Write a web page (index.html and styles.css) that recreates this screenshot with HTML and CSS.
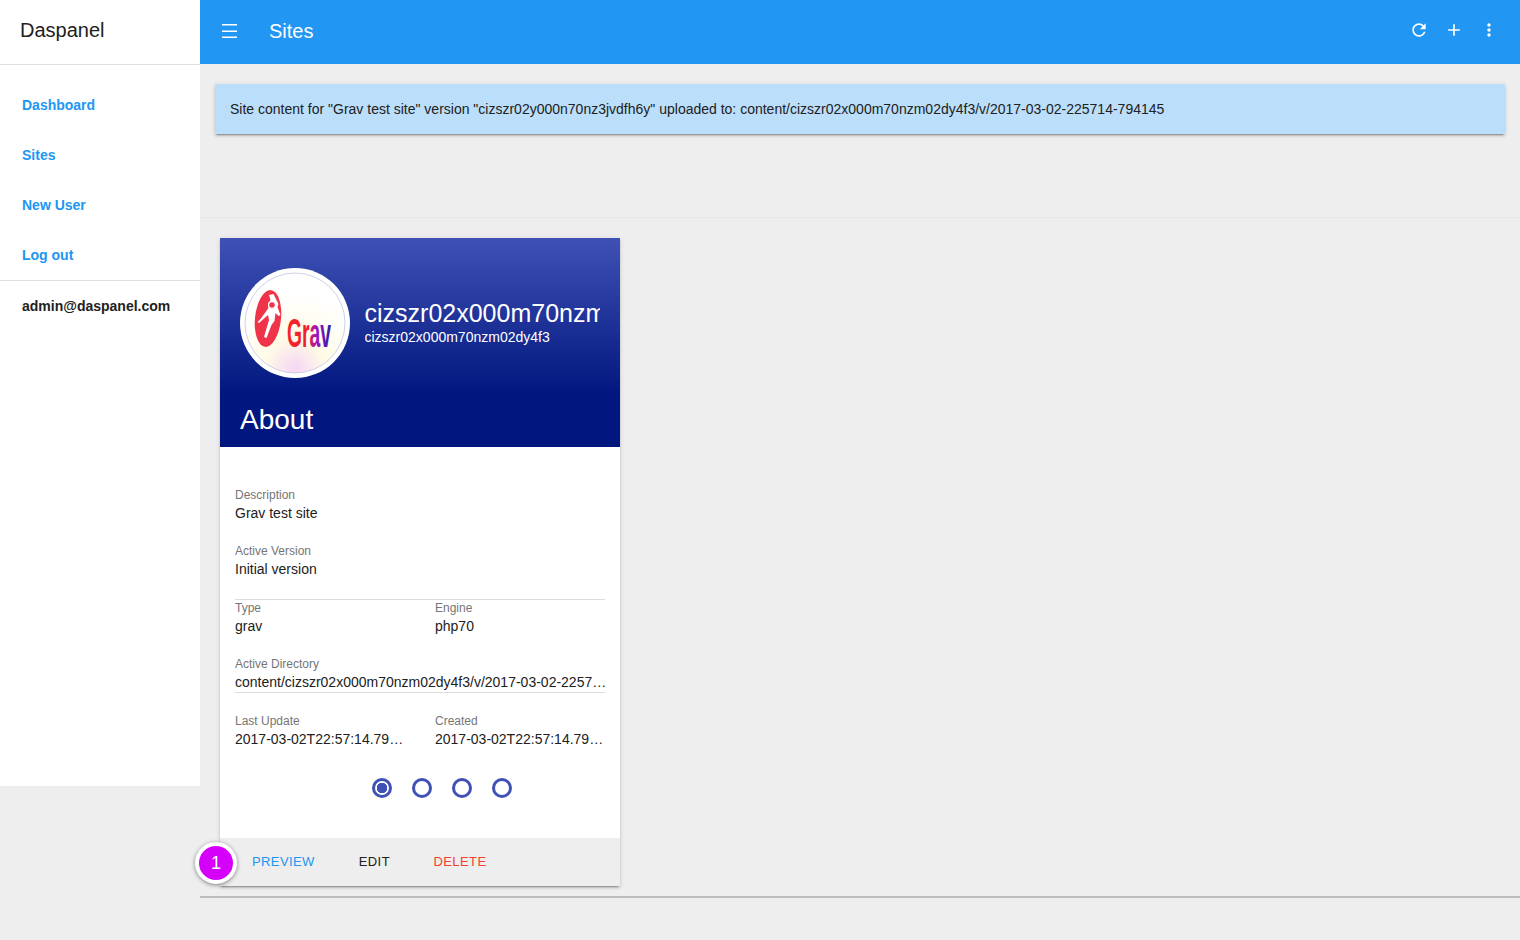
FILE: index.html
```html
<!DOCTYPE html>
<html lang="en">
<head>
  <meta charset="UTF-8" />
  <title>Daspanel - Sites</title>
  <link rel="stylesheet" href="styles.css">
</head>
<body>
  <div class="layout">
    <aside class="drawer">
      <div class="drawer-title">Daspanel</div>
      <nav class="drawer-nav">
        <a href="#">Dashboard</a>
        <a href="#">Sites</a>
        <a href="#">New User</a>
        <a href="#">Log out</a>
      </nav>
      <div class="drawer-user">admin@daspanel.com</div>
    </aside>

    <div class="main">
      <header class="topbar">
        <span class="menu-btn">
          <svg width="15" height="14" viewBox="0 0 15 14"><path d="M0 .8h15M0 7.2h15M0 13.2h15" stroke="#fff" stroke-width="1.6" fill="none"/></svg>
        </span>
        <span class="topbar-title">Sites</span>
        <span class="topbar-actions">
          <svg width="20" height="20" viewBox="0 0 24 24"><path fill="#fff" d="M17.65 6.35A7.958 7.958 0 0 0 12 4c-4.42 0-7.99 3.58-7.99 8s3.57 8 7.99 8c3.73 0 6.84-2.55 7.73-6h-2.08A5.99 5.99 0 0 1 12 18c-3.31 0-6-2.69-6-6s2.69-6 6-6c1.66 0 3.14.69 4.22 1.78L13 11h7V4l-2.35 2.35z"/></svg>
          <svg width="20" height="20" viewBox="0 0 24 24"><path fill="#fff" d="M19 13h-6v6h-2v-6H5v-2h6V5h2v6h6v2z"/></svg>
          <svg width="20" height="20" viewBox="0 0 24 24"><path fill="#fff" d="M12 8c1.1 0 2-.9 2-2s-.9-2-2-2-2 .9-2 2 .9 2 2 2zm0 2c-1.1 0-2 .9-2 2s.9 2 2 2 2-.9 2-2-.9-2-2-2zm0 6c-1.1 0-2 .9-2 2s.9 2 2 2 2-.9 2-2-.9-2-2-2z"/></svg>
        </span>
      </header>

      <section class="alerts">
        <div class="alert">Site content for "Grav test site" version "cizszr02y000n70nz3jvdfh6y" uploaded to: content/cizszr02x000m70nzm02dy4f3/v/2017-03-02-225714-794145</div>
      </section>

      <section class="cards">
        <article class="card">
          <span class="badge">1</span>
          <div class="card-head">
            <div class="site-row">
              <div class="site-logo">
                <svg width="110" height="110" viewBox="0 0 110 110">
                  <defs>
                    <linearGradient id="gravText" x1="0" x2="1" y1="0" y2="0">
                      <stop offset="0" stop-color="#f5222d"/>
                      <stop offset="0.45" stop-color="#f0202a"/>
                      <stop offset="0.68" stop-color="#a012c8"/>
                      <stop offset="1" stop-color="#2a1aa8"/>
                    </linearGradient>
                    <radialGradient id="glow" cx="0.5" cy="0.95" r="0.75">
                      <stop offset="0" stop-color="#f6d6f4"/>
                      <stop offset="0.4" stop-color="#fffbe6"/>
                      <stop offset="1" stop-color="#ffffff"/>
                    </radialGradient>
                  </defs>
                  <circle cx="55" cy="55" r="55" fill="#fff"/>
                  <circle cx="55" cy="55" r="50" fill="url(#glow)" stroke="#b9bfdc" stroke-width="0.7"/>
                  <ellipse cx="28" cy="50.5" rx="13" ry="28.5" transform="rotate(6 28 50.5)" fill="#ef3348"/>
                  <path d="M29 27l1.5 5-2 3 0 5-8 11-3 3 1.500 1 9-8 1 5-5 17 2.500 1 5-13 3-4 1-8 3 3 2-1-3-8 1-3-3-6-2-4z" fill="#fff"/>
                  <circle cx="32" cy="37" r="3.4" fill="#ef3348" stroke="#fff" stroke-width="1.300"/>
                  <text class="logo-text" x="47" y="79" fill="url(#gravText)" textLength="44" lengthAdjust="spacingAndGlyphs">Grav</text>
                </svg>
              </div>
              <div class="site-name">
                <div class="site-name-big">cizszr02x000m70nzm02dy4f3</div>
                <div class="site-name-small">cizszr02x000m70nzm02dy4f3</div>
              </div>
            </div>
            <h2 class="card-title">About</h2>
          </div>

          <div class="card-body">
            <div class="field">
              <div class="field-label">Description</div>
              <div class="field-value">Grav test site</div>
            </div>
            <div class="field">
              <div class="field-label">Active Version</div>
              <div class="field-value">Initial version</div>
            </div>
            <div class="field-row field-row-ruled">
              <div class="field">
                <div class="field-label">Type</div>
                <div class="field-value">grav</div>
              </div>
              <div class="field">
                <div class="field-label">Engine</div>
                <div class="field-value">php70</div>
              </div>
            </div>
            <div class="field field-ruled">
              <div class="field-label">Active Directory</div>
              <div class="field-value">content/cizszr02x000m70nzm02dy4f3/v/2017-03-02-225714-794145</div>
            </div>
            <div class="field-row">
              <div class="field">
                <div class="field-label">Last Update</div>
                <div class="field-value">2017-03-02T22:57:14.794145Z</div>
              </div>
              <div class="field">
                <div class="field-label">Created</div>
                <div class="field-value">2017-03-02T22:57:14.794145Z</div>
              </div>
            </div>
            <div class="dots">
              <span class="dot dot-on"></span>
              <span class="dot"></span>
              <span class="dot"></span>
              <span class="dot"></span>
            </div>
          </div>

          <div class="card-actions">
            <a href="#" class="btn btn-preview">Preview</a>
            <a href="#" class="btn btn-edit">Edit</a>
            <a href="#" class="btn btn-delete">Delete</a>
          </div>
        </article>
      </section>
    </div>
  </div>
</body>
</html>
```

FILE: styles.css
```css
* {
  box-sizing: border-box;
}

html, body {
  margin: 0;
  height: 940px;
  overflow: hidden;
}

body {
  font-family: "Liberation Sans", Arial, sans-serif;
  background: #eeeeee;
  color: #212121;
}

.layout {
  display: flex;
  align-items: flex-start;
}

/* drawer */
.drawer {
  width: 200px;
  height: 786px;
  flex: none;
  background: #fff;
}

.drawer-title {
  height: 65px;
  padding: 19px 20px 0;
  font-size: 20px;
  line-height: 23px;
  color: #212121;
  border-bottom: 1px solid #e0e0e0;
}

.drawer-nav {
  padding-top: 15px;
  border-bottom: 1px solid #e0e0e0;
}

.drawer-nav a {
  display: block;
  height: 50px;
  padding-left: 22px;
  font-size: 14px;
  font-weight: bold;
  line-height: 50px;
  color: #2196f3;
  text-decoration: none;
}

.drawer-user {
  padding: 17px 22px 0;
  font-size: 14px;
  font-weight: bold;
  line-height: 16px;
  color: #212121;
}

/* top bar */
.main {
  flex: 1;
  min-width: 0;
}

.topbar {
  height: 64px;
  display: flex;
  align-items: center;
  background: #2196f3;
  color: #fff;
}

.menu-btn {
  display: flex;
  margin-left: 22px;
  margin-top: -2px;
  width: 16px;
}

.topbar-title {
  margin-left: 31px;
  margin-top: -2px;
  font-size: 20px;
}

.topbar-actions {
  margin-left: auto;
  margin-right: 21px;
  display: flex;
  gap: 15px;
  margin-top: -4px;
}

/* alert */
.alerts {
  height: 154px;
  padding: 20px 15px 0 15px;
  border-bottom: 1px solid #e8e8e8;
}

.alert {
  height: 50px;
  padding-left: 15px;
  font-size: 14px;
  line-height: 50px;
  background: #bbdefb;
  box-shadow: 0 2px 2px rgba(0, 0, 0, 0.14), 0 3px 1px -2px rgba(0, 0, 0, 0.2), 0 1px 5px rgba(0, 0, 0, 0.12);
}

/* card */
.cards {
  padding: 20px 0 10px 20px;
  border-bottom: 2px solid #bdbdbd;
}

.card {
  position: relative;
  width: 400px;
  height: 648px;
  display: flex;
  flex-direction: column;
  background: #fff;
  box-shadow: 0 2px 2px rgba(0, 0, 0, 0.14), 0 3px 1px -2px rgba(0, 0, 0, 0.2), 0 1px 5px rgba(0, 0, 0, 0.12);
}

.badge {
  position: absolute;
  left: -25px;
  bottom: 2px;
  width: 42px;
  height: 42px;
  border: 4px solid #fff;
  border-radius: 50%;
  background: #d500f9;
  color: #fff;
  font-size: 18px;
  line-height: 34px;
  text-align: center;
  box-shadow: 0 1px 4px rgba(0, 0, 0, 0.45);
}

.card-head {
  height: 209px;
  flex: none;
  padding: 30px 20px 0;
  background: linear-gradient(#3f51b5, #01177f 75%, #01177f);
  color: #fff;
}

.site-row {
  display: flex;
  align-items: center;
}

.site-logo {
  width: 110px;
  height: 110px;
  flex: none;
}

.site-logo svg {
  display: block;
}

.logo-text {
  font-family: "Liberation Sans", Arial, sans-serif;
  font-size: 41px;
  font-weight: bold;
}

.site-name {
  min-width: 0;
  flex: 1;
  margin-left: 14.5px;
  margin-bottom: 4px;
  overflow: hidden;
  white-space: nowrap;
}

.site-name-big {
  font-size: 25px;
  line-height: 30px;
  overflow: hidden;
}

.site-name-small {
  margin-top: 1px;
  font-size: 14px;
  line-height: 16px;
}

.card-title {
  margin: 26px 0 0;
  font-size: 28px;
  font-weight: normal;
  line-height: 32px;
}

.card-body {
  flex: 1;
  padding: 41px 15px 0;
}

.field {
  min-width: 0;
  margin-bottom: 22px;
}

.field-label {
  font-size: 12px;
  line-height: 14px;
  color: #757575;
}

.field-value {
  margin-top: 3px;
  font-size: 14px;
  line-height: 17px;
  white-space: nowrap;
  overflow: hidden;
  text-overflow: ellipsis;
}

.field-row {
  display: grid;
  grid-template-columns: 170px 170px;
  column-gap: 30px;
}

.field-row-ruled {
  margin-top: -1px;
  border-top: 1px solid #dcdcdc;
  padding-top: 1px;
}

.field-ruled {
  border-bottom: 1px solid #dcdcdc;
  margin-bottom: 21px;
  padding-bottom: 1px;
}

.field-ruled .field-value {
  margin-right: -2px;
}

.dots {
  display: flex;
  justify-content: center;
  gap: 20px;
  margin-top: 8px;
  padding-left: 44px;
}

.dot {
  width: 20px;
  height: 20px;
  border: 3px solid #3f51b5;
  border-radius: 50%;
  background: #fff;
}

.dot-on {
  background: radial-gradient(circle, #3f51b5 0 5px, #fff 5.5px);
}

.card-actions {
  height: 48px;
  flex: none;
  display: flex;
  align-items: center;
  background: #eeeeee;
  padding-bottom: 1px;
}

.btn {
  font-size: 13px;
  letter-spacing: 0.4px;
  text-transform: uppercase;
  text-decoration: none;
}

.btn-preview {
  margin-left: 32px;
  color: #2196f3;
}

.btn-edit {
  margin-left: 44px;
  color: #212121;
}

.btn-delete {
  margin-left: 43.500px;
  color: #f4402f;
}
```
